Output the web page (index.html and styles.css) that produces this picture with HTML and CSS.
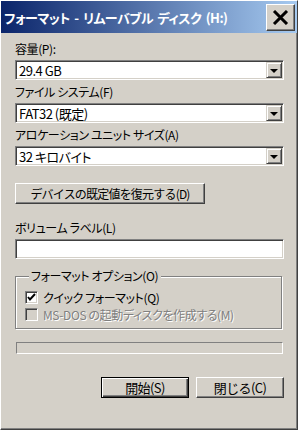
FILE: index.html
```html
<!DOCTYPE html>
<html lang="ja">
  <head>
    <meta charset="UTF-8" />
    <title>フォーマット - リムーバブル ディスク (H:)</title>
    <link rel="stylesheet" href="styles.css">
  </head>
  <body>
    <div class="window">
      <div class="titlebar">
        <span class="title">フォーマット - リムーバブル ディスク (H:)</span>
        <button class="close">
          <svg width="17" height="15" viewBox="0 0 17 15">
            <path d="M2 1 L15 14 M15 1 L2 14" stroke="#000" stroke-width="3" />
          </svg>
        </button>
      </div>

      <div class="content">
        <div class="label">容量(P):</div>
        <div class="combo">
          <span class="value">29.4 GB</span>
          <span class="drop"><i class="arrow"></i></span>
        </div>

        <div class="label">ファイル システム(F)</div>
        <div class="combo">
          <span class="value">FAT32 (既定)</span>
          <span class="drop"><i class="arrow"></i></span>
        </div>

        <div class="label">アロケーション ユニット サイズ(A)</div>
        <div class="combo">
          <span class="value">32 キロバイト</span>
          <span class="drop"><i class="arrow"></i></span>
        </div>

        <button class="btn restore">デバイスの既定値を復元する(D)</button>

        <div class="label">ボリューム ラベル(L)</div>
        <div class="textbox"></div>

        <fieldset class="group">
          <legend>フォーマット オプション(O)</legend>
          <div class="check">
            <span class="box">
              <svg width="9" height="9" viewBox="0 0 9 9">
                <path d="M1 4 L3 6.5 L8 1" stroke="#000" stroke-width="2" fill="none" />
              </svg>
            </span>
            <span>クイック フォーマット(Q)</span>
          </div>
          <div class="check disabled">
            <span class="box"></span>
            <span>MS-DOS の起動ディスクを作成する(M)</span>
          </div>
        </fieldset>

        <div class="progress"></div>

        <div class="actions">
          <button class="btn default">開始(S)</button>
          <button class="btn">閉じる(C)</button>
        </div>
      </div>
    </div>
  </body>
</html>
```

FILE: styles.css
```css
body {
  margin: 0;
  background-color: #d4d0c8;
  font-family: "Noto Sans CJK JP", "DejaVu Sans", sans-serif;
  font-size: 12px;
  font-feature-settings: "palt";
}
.window {
  width: 298px;
  height: 430px;
  box-sizing: border-box;
  background-color: #d4d0c8;
  border-left: 1px solid #fff;
  border-top: 1px solid #fff;
  border-right: 1px solid #404040;
  border-bottom: 1px solid #404040;
  box-shadow: inset -1px -1px 0 #808080;
}
.titlebar {
  height: 32px;
  display: flex;
  align-items: center;
  justify-content: space-between;
  padding: 0 2px 0 3px;
  background: linear-gradient(to right, #0a246a, #a6caf0);
}
.title {
  color: #fff;
  font-size: 13px;
  font-weight: bold;
  letter-spacing: -0.5px;
  word-spacing: 2px;
  white-space: nowrap;
}
.close {
  width: 29px;
  height: 27px;
  padding: 0;
  display: flex;
  align-items: center;
  justify-content: center;
  background-color: #d4d0c8;
  border: 1px solid;
  border-color: #fff #404040 #404040 #fff;
  box-shadow: inset -1px -1px 0 #808080;
}
.content {
  padding: 8px 13px 0 14px;
}
.label {
  height: 16px;
  line-height: 16px;
  margin-bottom: 3px;
  letter-spacing: -0.4px;
  white-space: nowrap;
}
.combo,
.textbox {
  height: 20px;
  box-sizing: border-box;
  background-color: #fff;
  border: 1px solid;
  border-color: #808080 #fff #fff #808080;
  box-shadow: inset 1px 1px 0 #404040, inset -1px -1px 0 #d4d0c8;
}
.combo {
  display: flex;
  align-items: center;
  padding: 1px 1px 1px 3px;
  margin-bottom: 4px;
}
.value {
  flex: 1;
  font-size: 13px;
  letter-spacing: -0.5px;
  white-space: nowrap;
}
.drop {
  width: 16px;
  height: 16px;
  box-sizing: border-box;
  display: flex;
  align-items: center;
  justify-content: center;
  background-color: #d4d0c8;
  border: 1px solid;
  border-color: #d4d0c8 #404040 #404040 #d4d0c8;
  box-shadow: inset 1px 1px 0 #fff, inset -1px -1px 0 #808080;
}
.arrow {
  width: 0;
  height: 0;
  border-left: 4px solid transparent;
  border-right: 4px solid transparent;
  border-top: 4px solid #000;
  margin-top: 1px;
}
.btn {
  height: 21px;
  padding: 0;
  font-family: inherit;
  font-size: 13px;
  letter-spacing: -0.6px;
  color: #000;
  background-color: #d4d0c8;
  border: 1px solid;
  border-color: #fff #404040 #404040 #fff;
  box-shadow: inset -1px -1px 0 #808080;
  white-space: nowrap;
}
.restore {
  display: block;
  width: 190px;
  margin: 17px 0 16px 0;
  font-size: 12px;
  letter-spacing: -0.8px;
}
.textbox {
  margin-bottom: 9px;
}
.group {
  margin: 0 2px 0 0;
  padding: 5px 0 5px 9px;
  border: 1px solid #808080;
  box-shadow: 1px 1px 0 #fff, inset 1px 1px 0 #fff;
}
.group legend {
  padding: 0 3px 0 2px;
  margin-left: 4px;
  background-color: #d4d0c8;
  letter-spacing: -0.4px;
  line-height: 16px;
}
.check {
  display: flex;
  align-items: center;
  gap: 5px;
  height: 17px;
  line-height: 16px;
  letter-spacing: -0.4px;
  white-space: nowrap;
}
.box {
  width: 13px;
  height: 13px;
  box-sizing: border-box;
  display: flex;
  align-items: center;
  justify-content: center;
  background-color: #fff;
  border: 1px solid;
  border-color: #808080 #fff #fff #808080;
  box-shadow: inset 1px 1px 0 #404040, inset -1px -1px 0 #d4d0c8;
}
.disabled {
  color: #808080;
  text-shadow: 1px 1px 0 #fff;
}
.disabled .box {
  background-color: #d4d0c8;
}
.progress {
  height: 12px;
  margin: 13px 1px 0 1px;
  box-sizing: border-box;
  border: 1px solid;
  border-color: #808080 #fff #fff #808080;
}
.actions {
  display: flex;
  justify-content: flex-end;
  gap: 7px;
  margin: 23px 0 0 0;
}
.actions .btn {
  width: 88px;
}
.default {
  border: 1px solid #000;
  box-shadow: inset 1px 1px 0 #fff, inset -1px -1px 0 #404040, inset -2px -2px 0 #808080;
}
```
